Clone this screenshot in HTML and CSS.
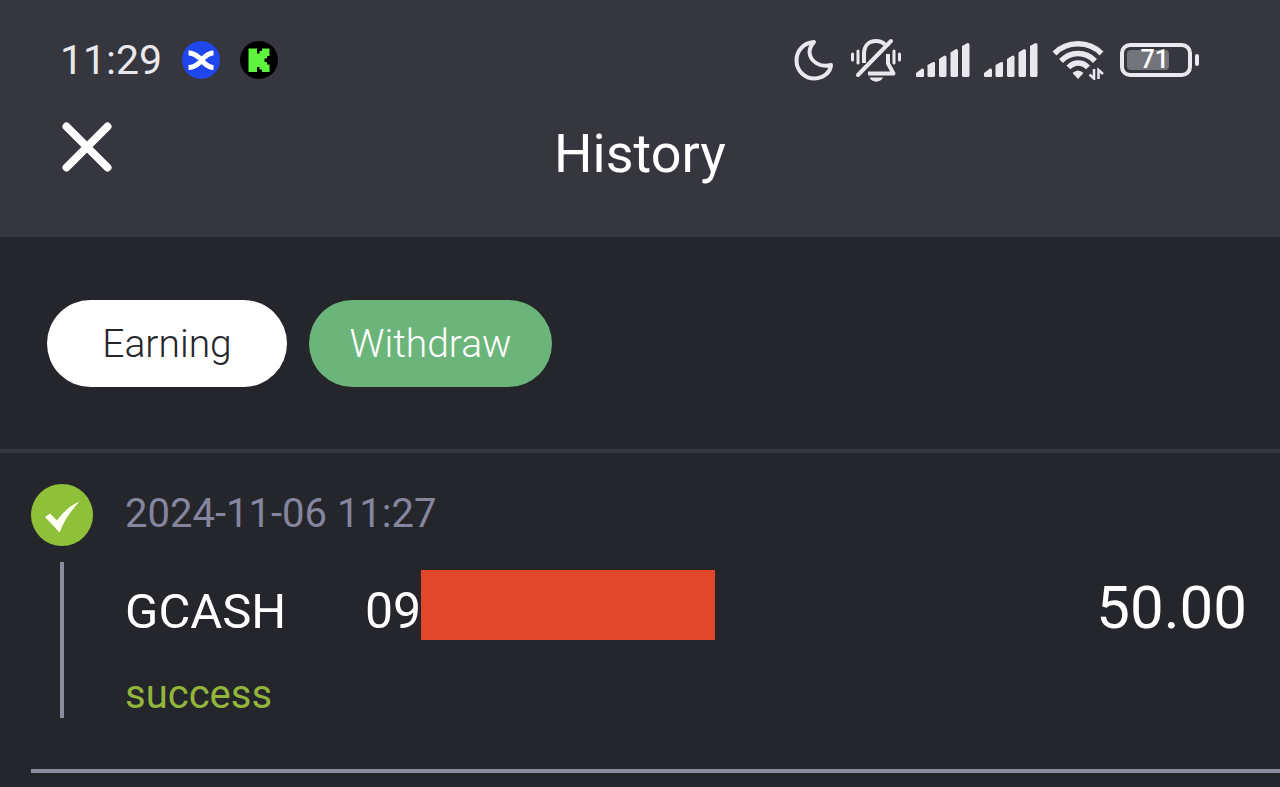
FILE: index.html
```html
<!DOCTYPE html>
<html lang="en">
<head>
<meta charset="utf-8">
<meta name="viewport" content="width=device-width, initial-scale=1">
<title>History</title>
<link rel="stylesheet" href="styles.css">
</head>
<body>
<header class="header">
  <div class="status">
    <time class="clock">11:29</time>
    <div class="apps">
      <svg width="38" height="38" viewBox="0 0 38 38" aria-hidden="true"><circle cx="19" cy="19" r="19" fill="#1f46ec"/><path d="M6.500 12C14 12 16.500 17 19.500 18.500C22.500 17 25 12 31.500 12M6.500 26.500C14 26.500 16.500 21.500 19.500 20C22.500 21.500 25 26.500 31.500 26.500" fill="none" stroke="#fff" stroke-width="5"/></svg>
      <svg width="38" height="38" viewBox="0 0 38 38" aria-hidden="true"><circle cx="19" cy="19" r="19" fill="#000"/><path d="M8.500 7.500H17V12.500H19.500V10H22V7.500H29.500V15H27V17.500H24.500V21H27V23.500H29.500V31H22V28.500H19.500V26H17V31H8.500Z" fill="#5df33f"/></svg>
    </div>
    <div class="indicators">
      <svg width="40" height="42" viewBox="0 0 40 42" aria-hidden="true"><path d="M20 3C9 4 2.500 12 2.500 21.500C2.500 32 11 39.500 20.500 39.500C29 39.500 36.500 33.500 37 26C27 29 16 23 15.500 13C15.500 9 17.500 6 20 3Z" fill="none" stroke="#e9e9ed" stroke-width="4" stroke-linejoin="round"/></svg>
      <svg class="bell" width="52" height="44" viewBox="0 0 52 44" fill="none" stroke="#e9e9ed" aria-hidden="true"><path d="M14 25V16C14 7.500 19 3 26 3C30 3 33 4.500 35 6.500M38 16V25.500L43.500 35.500H18" stroke-width="4" stroke-linejoin="round"/><path d="M8 37L41 3" stroke-width="4" stroke-linecap="round"/><path d="M2.500 16V22M8 13V25M44 13V25M49.500 16V22" stroke-width="3" stroke-linecap="round"/><path d="M19.500 39.500H33C31 45 21.500 45 19.500 39.500Z" fill="#e9e9ed" stroke="none"/></svg>
      <svg width="54" height="36" viewBox="0 0 54 36" fill="#e9e9ed" aria-hidden="true"><path id="bars" d="M0 31L6 26.500Q8 26 8 28V34Q8 35 7 35H1Q0 35 0 34ZM11.500 23L17 20Q19 19.500 19 21V34L18 35H12.500L11.500 34ZM23 17L28.500 13.500Q30.500 13.500 30.500 15V34L29.500 35H24L23 34ZM34.500 10.500L40 7Q42 7 42 8.500V34L41 35H35.500L34.500 34ZM46 4L51.500 1Q53.500 1 53.500 2.500V34L52.500 35H47L46 34Z"/></svg>
      <svg width="54" height="36" viewBox="0 0 54 36" fill="#e9e9ed" aria-hidden="true"><use href="#bars"/></svg>
      <svg width="52" height="40" viewBox="0 0 52 40" fill="none" stroke="#e9e9ed" aria-hidden="true"><path d="M2.500 13.500C15 .500 37 .500 49.500 13.500M9 21C18.500 11 33.500 11 43 21M16.500 27.500C22 21.500 30.500 21.500 36 27.500" stroke-width="5.500"/><path d="M20.500 33Q26 28 31.500 33L26 39Z" fill="#e9e9ed" stroke="none"/><path d="M42 29V38.500L37.500 34.500M46.500 39V30L51 34" stroke-width="2.500"/></svg>
      <div class="battery"><span class="level">71</span></div>
    </div>
  </div>
  <div class="titlebar">
    <button class="close" type="button" aria-label="Close"><svg width="50" height="50" viewBox="0 0 50 50" aria-hidden="true"><path d="M4.500 4.500L45.500 45.500M45.500 4.500L4.500 45.500" stroke="#fff" stroke-width="8" stroke-linecap="round"/></svg></button>
    <h1 class="title">History</h1>
  </div>
</header>
<main>
  <nav class="tabs">
    <button class="tab" type="button">Earning</button>
    <button class="tab tab-active" type="button">Withdraw</button>
  </nav>
  <article class="entry">
    <div class="rail">
      <svg width="62" height="62" viewBox="0 0 62 62" aria-hidden="true"><circle cx="31" cy="31" r="31" fill="#8ec03a"/><path d="M14 33L19 29.500L26 36.500C32 28 39 21.500 48.500 17.500C40 26.500 33.500 36 28.500 48.500Z" fill="#fffff2"/></svg>
      <span class="line"></span>
    </div>
    <div class="details">
      <time class="date">2024-11-06 11:27</time>
      <div class="payment">
        <span class="method">GCASH</span>
        <span class="account">09</span>
        <span class="mask"></span>
        <span class="amount">50.00</span>
      </div>
      <p class="state">success</p>
    </div>
  </article>
</main>
</body>
</html>
```
FILE: styles.css
```css
* {
  box-sizing: border-box;
}

body {
  margin: 0;
  background: #25262b;
  color: #fff;
  font-family: Roboto, "Liberation Sans", sans-serif;
}

svg {
  display: block;
  flex: none;
}

button {
  border: 0;
  font: inherit;
  cursor: pointer;
}

.header {
  padding: 34px 88px 51px 60px;
  background: #36363f;
}

.status {
  display: flex;
  align-items: center;
  height: 52px;
}

.clock {
  font-size: 41px;
  line-height: 52px;
  color: #e9e9ed;
}

.apps {
  display: flex;
  gap: 20px;
  margin-left: 20px;
}

.indicators {
  display: flex;
  align-items: center;
  gap: 14px;
  margin-left: auto;
}

.bell {
  margin-left: 2px;
}

.battery {
  position: relative;
  display: flex;
  width: 72px;
  height: 34px;
  margin-left: 2px;
  padding: 3px;
  border: 4px solid #e9e9ed;
  border-radius: 10px;
}

.battery::after {
  content: "";
  position: absolute;
  top: 7px;
  right: -11px;
  width: 4px;
  height: 12px;
  border-radius: 2px;
  background: #e9e9ed;
}

.level {
  width: 42px;
  border-radius: 4px;
  background: #73737a;
  color: #fff;
  font-size: 25px;
  font-weight: 500;
  line-height: 20px;
  text-align: right;
}

.titlebar {
  display: grid;
  grid-template-columns: 50px 1fr 24px;
  align-items: start;
  padding: 36px 0 0 2px;
}

.close {
  padding: 0;
  background: none;
}

.title {
  margin: 0;
  font-size: 54px;
  font-weight: 400;
  line-height: 64px;
  text-align: center;
}

.tabs {
  display: flex;
  gap: 22px;
  padding: 63px 47px 62px;
  border-bottom: 4px solid #36363f;
}

.tab {
  min-width: 240px;
  height: 87px;
  padding: 0 39px;
  border-radius: 44px;
  background: #fff;
  color: #25262b;
  font-size: 39px;
  font-weight: 300;
}

.tab-active {
  min-width: 243px;
  background: #6bb57b;
  color: #fff;
}

.entry {
  display: flex;
  gap: 32px;
  margin-left: 31px;
  padding: 31px 33px 51px 0;
  border-bottom: 4px solid #8c8ca1;
}

.rail {
  display: flex;
  flex-direction: column;
  align-items: center;
  gap: 16px;
}

.line {
  flex: 1;
  width: 4px;
  background: #8c8ca1;
}

.details {
  flex: 1;
}

.date {
  display: block;
  color: #8585a0;
  font-size: 40px;
  font-weight: 400;
  line-height: 60px;
}

.payment {
  display: flex;
  align-items: baseline;
  height: 70px;
  margin-top: 26px;
}

.method {
  width: 240px;
  font-size: 49px;
}

.account {
  font-size: 50px;
}

.mask {
  align-self: center;
  width: 294px;
  height: 70px;
  background: #e1472b;
}

.amount {
  margin-left: auto;
  font-size: 60px;
  line-height: 76px;
}

.state {
  margin: 32px 0 0;
  color: #93b53b;
  font-size: 40px;
  line-height: 46px;
}
```
